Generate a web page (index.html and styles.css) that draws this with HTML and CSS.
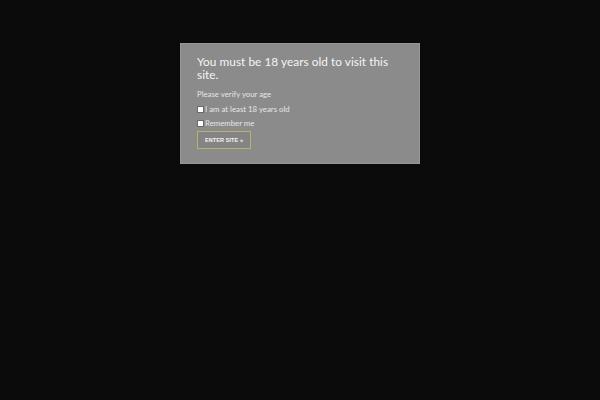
FILE: index.html
```html
<!DOCTYPE html>
<html>
<head>
<meta charset="utf-8">
<link rel="stylesheet" href="styles.css">
</head>
<body>
<div class="overlay">
  <div class="modal">
    <h1 class="title">You must be 18 years old to visit this site.</h1>
    <p class="sub">Please verify your age</p>
    <label class="check"><span class="box"></span>I am at least 18 years old</label>
    <label class="check"><span class="box"></span>Remember me</label>
    <button class="enter">ENTER SITE »</button>
  </div>
</div>
</body>
</html>
```
FILE: styles.css
```css
html, body {
  margin: 0;
  padding: 0;
  background: #0b0b0b;
  width: 600px;
  height: 400px;
  overflow: hidden;
  font-family: Lato, "Open Sans", sans-serif;
}
.overlay {
  display: flex;
  justify-content: center;
  padding-top: 43px;
}
.modal {
  width: 240px;
  height: 121px;
  box-sizing: border-box;
  background: #8b8b8b;
  border: 1px solid #979797;
  padding: 12px 16px 0 16px;
  display: flex;
  flex-direction: column;
  align-items: flex-start;
  color: #e8e8e8;
}
.title {
  margin: 0;
  font-weight: 400;
  font-size: 11.8px;
  line-height: 12.5px;
  letter-spacing: 0.05px;
  color: #f5f5f5;
}
.sub {
  margin: 8px 0 0 0;
  font-size: 7.8px;
  line-height: 10px;
  color: #e6e6e6;
}
.check {
  display: flex;
  align-items: center;
  margin-top: 5px;
  font-size: 7.8px;
  line-height: 10px;
  color: #e6e6e6;
}
.check + .check {
  margin-top: 4px;
}
.box {
  width: 5px;
  height: 5px;
  background: #ffffff;
  border: 1px solid #6a6a6a;
  margin-right: 1px;
}
.enter {
  margin-top: 3px;
  width: 54px;
  height: 18px;
  padding: 0;
  background: #848484;
  border: 1px solid #b9b26e;
  color: #f4f4f4;
  font-family: "Liberation Sans", sans-serif;
  font-weight: 700;
  font-size: 5.5px;
  letter-spacing: 0.1px;
}
```
